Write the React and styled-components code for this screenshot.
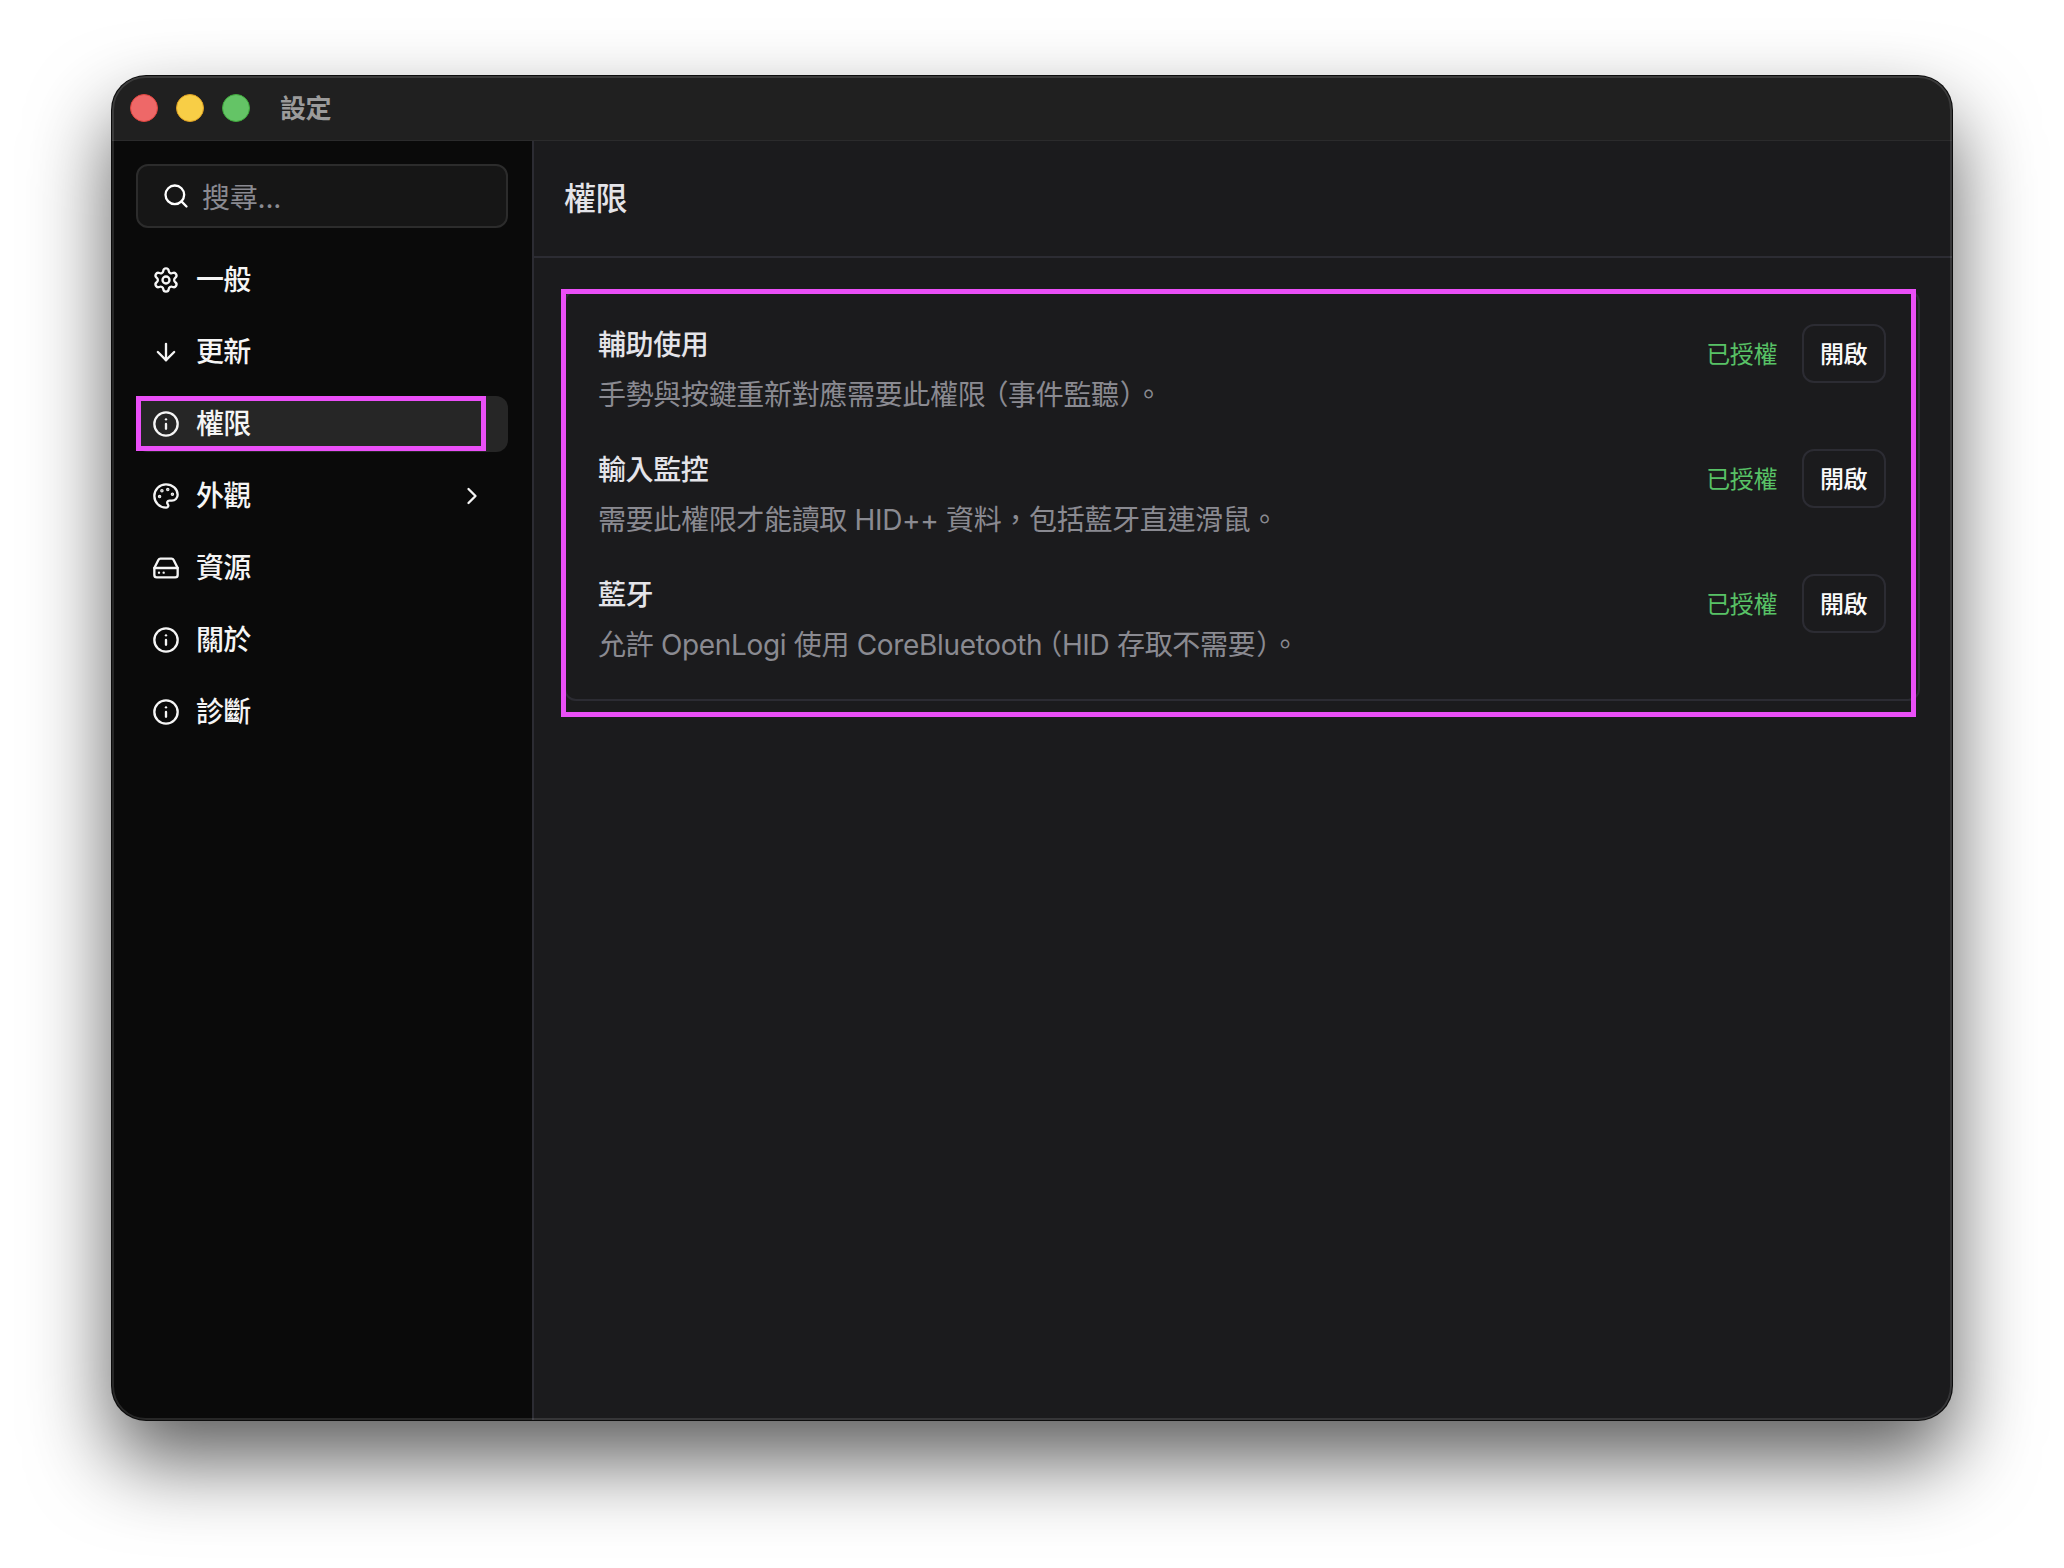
import React from 'react';
import styled, { createGlobalStyle } from 'styled-components';
import {
  ArrowDown,
  ChevronRight,
  HardDrive,
  Info,
  Palette,
  Search,
  Settings,
} from 'lucide-react';

const GlobalStyle = createGlobalStyle`
  * {
    box-sizing: border-box;
  }

  body {
    margin: 0;
    background: #ffffff;
    font-family: Inter, 'Noto Sans CJK TC', sans-serif;
  }
`;

// Styled Components
const Desktop = styled.div`
  width: 2064px;
  height: 1568px;
  padding: 76px 112px;
  overflow: hidden;
`;

const Window = styled.div`
  position: relative;
  display: flex;
  flex-direction: column;
  width: 1840px;
  height: 1344px;
  border-radius: 34px;
  overflow: hidden;
  background: #1b1b1d;
  box-shadow:
    0 0 0 1px #0c0c0c,
    0 40px 82px rgba(0, 0, 0, 0.64);

  &::after {
    content: '';
    position: absolute;
    inset: 0;
    border: 2px solid rgba(255, 255, 255, 0.12);
    border-radius: 34px;
    pointer-events: none;
  }
`;

const TitleBar = styled.header`
  display: flex;
  align-items: center;
  gap: 18px;
  height: 65px;
  padding: 0 18px 1px;
  background: #202020;
  border-bottom: 1px solid #2b2b2c;
`;

const Light = styled.span`
  width: 28px;
  height: 28px;
  border-radius: 50%;
  background: ${({ $color }) => $color};
  border: 1px solid ${({ $edge }) => $edge};
`;

const WindowTitle = styled.span`
  margin-left: 12px;
  padding-top: 2px;
  font-size: 26px;
  font-weight: 700;
  letter-spacing: -0.5px;
  line-height: 32px;
  color: #9b9b9b;
`;

const Body = styled.div`
  display: flex;
  flex: 1;
  min-height: 0;
`;

const Sidebar = styled.aside`
  width: 422px;
  padding: 23px 24px 0;
  background: #0a0a0a;
  border-right: 2px solid #2c2c33;
`;

const SearchBox = styled.div`
  display: flex;
  align-items: center;
  gap: 12px;
  height: 64px;
  padding: 0 24px;
  border: 2px solid #2c2c2c;
  border-radius: 12px;
  background: #161616;
  color: #ffffff;
`;

const Placeholder = styled.span`
  padding-top: 3px;
  font-size: 28px;
  letter-spacing: -0.2px;
  line-height: 40px;
  color: #8a8a91;
`;

const Nav = styled.nav`
  display: flex;
  flex-direction: column;
  gap: 16px;
  margin-top: 24px;
`;

const NavItem = styled.div`
  position: relative;
  display: flex;
  align-items: center;
  gap: 16px;
  height: 56px;
  padding: 0 22px 0 16px;
  border-radius: 12px;
  background: ${({ $active }) => ($active ? '#262626' : 'transparent')};
  color: #f5f5f5;
`;

const NavLabel = styled.span`
  flex: 1;
  font-size: 28px;
  font-weight: 500;
  letter-spacing: -0.7px;
  line-height: 40px;
`;

const Content = styled.main`
  flex: 1;
  display: flex;
  flex-direction: column;
`;

const PageHeader = styled.div`
  height: 117px;
  padding: 35px 30px 0;
  border-bottom: 2px solid #2c2c33;
`;

const PageTitle = styled.h1`
  margin: 0;
  font-size: 32px;
  font-weight: 500;
  letter-spacing: -0.5px;
  line-height: 46px;
  color: #e4e4e9;
`;

const Card = styled.section`
  position: relative;
  display: flex;
  flex-direction: column;
  gap: 25px;
  height: 411px;
  margin: 32px 32px 0 30px;
  padding: 32px;
  border: 2px solid #2c2c33;
  border-radius: 12px;
`;

const PermissionRow = styled.div`
  display: flex;
  flex-shrink: 0;
  justify-content: space-between;
  height: 100px;
`;

const PermissionText = styled.div`
  display: flex;
  flex-direction: column;
  gap: 10px;
  padding-top: 1px;
`;

const PermissionName = styled.div`
  font-size: 28px;
  font-weight: 500;
  letter-spacing: -0.4px;
  line-height: 40px;
  color: #e4e4e9;
`;

const PermissionHint = styled.div`
  font-size: 28px;
  letter-spacing: -0.33px;
  line-height: 40px;
  white-space: nowrap;
  color: #8a8a91;
`;

// Brackets set half-width, with their own side spacing.
// The zero line-height keeps them from moving the baseline.
const Bracket = styled.span`
  margin-left: ${({ $before = 0 }) => $before}px;
  margin-right: ${({ $after = 0 }) => $after}px;
  font-family: 'Noto Sans CJK TC', sans-serif;
  font-feature-settings: 'halt';
  line-height: 0;
`;

const Actions = styled.div`
  display: flex;
  align-items: center;
  gap: 25px;
  height: 59px;
`;

const Status = styled.span`
  padding-top: 2px;
  font-size: 24px;
  letter-spacing: -0.4px;
  line-height: 32px;
  color: #58c266;
`;

const OpenButton = styled.button`
  width: 84px;
  height: 59px;
  padding: 2px 1px 0 0;
  border: 2px solid #2c2c33;
  border-radius: 12px;
  background: transparent;
  font-family: inherit;
  font-size: 24px;
  font-weight: 500;
  letter-spacing: -0.5px;
  line-height: 32px;
  color: #fafafa;
`;

// Magenta frame drawn over whatever it annotates
const Highlight = styled.div`
  position: absolute;
  top: ${({ $top }) => $top}px;
  left: ${({ $left }) => $left}px;
  width: ${({ $width }) => $width}px;
  height: ${({ $height }) => $height}px;
  border: 5px solid #ea4ff7;
`;

const sections = [
  { label: '一般', icon: Settings },
  { label: '更新', icon: ArrowDown },
  { label: '權限', icon: Info, active: true },
  { label: '外觀', icon: Palette, expandable: true },
  { label: '資源', icon: HardDrive },
  { label: '關於', icon: Info },
  { label: '診斷', icon: Info },
];

const permissions = [
  {
    name: '輔助使用',
    hint: (
      <>
        手勢與按鍵重新對應需要此權限<Bracket $before={9}>（</Bracket>事件監聽
        <Bracket $before={1} $after={1}>）</Bracket>。
      </>
    ),
  },
  { name: '輸入監控', hint: '需要此權限才能讀取 HID++ 資料，包括藍牙直連滑鼠。' },
  {
    name: '藍牙',
    hint: (
      <>
        允許 OpenLogi 使用 CoreBluetooth<Bracket $before={6}>（</Bracket>HID 存取不需要
        <Bracket $before={1} $after={1}>）</Bracket>。
      </>
    ),
  },
];

const App = () => (
  <Desktop lang="zh-Hant">
    <GlobalStyle />
    <Window>
      <TitleBar>
        <Light $color="#ee6868" $edge="#e0443e" />
        <Light $color="#f8ce46" $edge="#dea123" />
        <Light $color="#64c466" $edge="#3fa83c" />
        <WindowTitle>設定</WindowTitle>
      </TitleBar>

      <Body>
        <Sidebar>
          <SearchBox>
            <Search size={28} strokeWidth={2} />
            <Placeholder>搜尋...</Placeholder>
          </SearchBox>
          <Nav>
            {sections.map(({ label, icon: Icon, active, expandable }) => (
              <NavItem key={label} $active={active}>
                <Icon size={28} strokeWidth={2} />
                <NavLabel>{label}</NavLabel>
                {expandable && <ChevronRight size={28} strokeWidth={2} />}
                {active && <Highlight $top={0} $left={0} $width={350} $height={55} />}
              </NavItem>
            ))}
          </Nav>
        </Sidebar>

        <Content>
          <PageHeader>
            <PageTitle>權限</PageTitle>
          </PageHeader>
          <Card>
            {permissions.map(({ name, hint }) => (
              <PermissionRow key={name}>
                <PermissionText>
                  <PermissionName>{name}</PermissionName>
                  <PermissionHint>{hint}</PermissionHint>
                </PermissionText>
                <Actions>
                  <Status>已授權</Status>
                  <OpenButton>開啟</OpenButton>
                </Actions>
              </PermissionRow>
            ))}
            <Highlight $top={-3} $left={-5} $width={1355} $height={428} />
          </Card>
        </Content>
      </Body>
    </Window>
  </Desktop>
);

export default App;
